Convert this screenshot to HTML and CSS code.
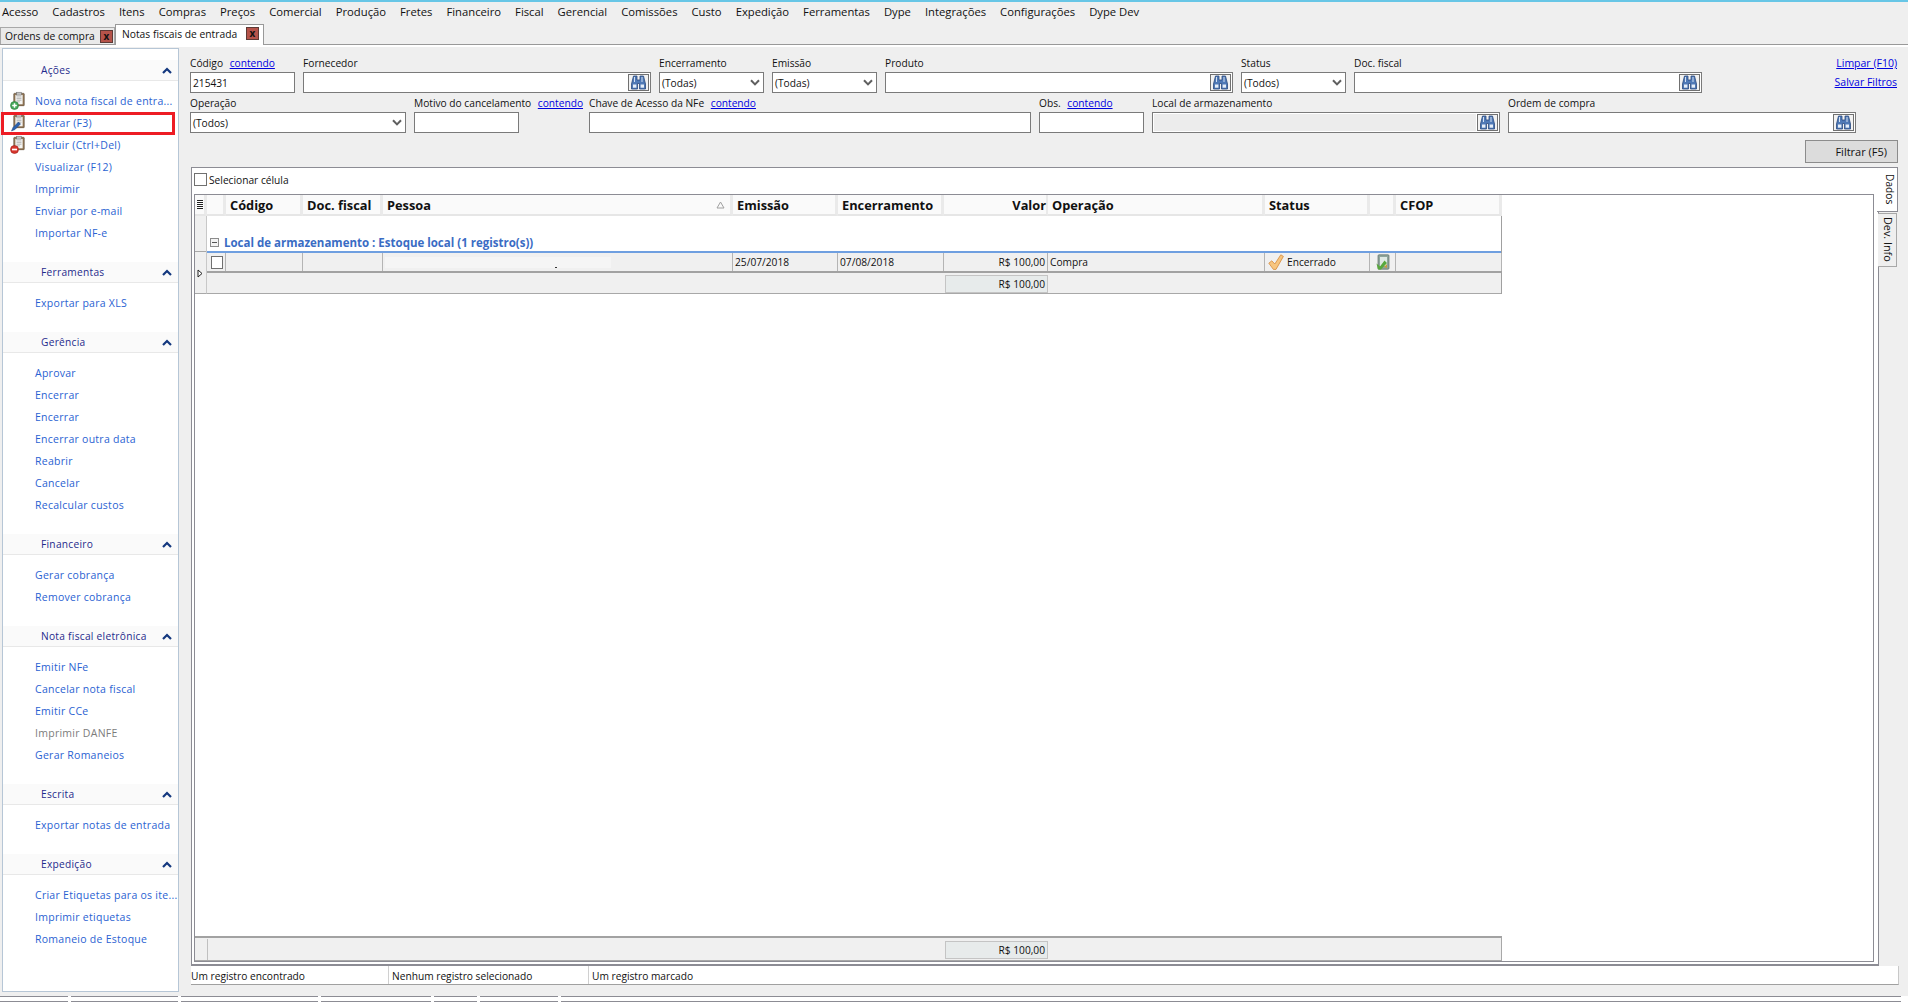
FILE: index.html
```html
<!DOCTYPE html>
<html lang="pt-BR">
<head>
    <meta charset="UTF-8">
    <title>Notas fiscais de entrada</title>
    <link rel="stylesheet" href="styles.css">
</head>
<body>
    <svg class="defs" width="0" height="0">
        <symbol id="clip" viewBox="0 0 16 18">
            <rect x="1.5" y="2" width="13" height="15.5" rx="1" fill="#8f7453" stroke="#5f5040" stroke-width="0.7"/>
            <rect x="3.5" y="4" width="9" height="11.5" fill="#f4f4f2"/>
            <rect x="5" y="0.6" width="6" height="3.6" fill="#c2c2c2" stroke="#666" stroke-width="0.6"/>
            <path d="M5 6.5h6M5 8.5h6M5 10.5h6M5 12.5h4" stroke="#9a9a9a" stroke-width="0.8"/>
        </symbol>
        <symbol id="binoc" viewBox="0 0 17 15">
            <path d="M3.5 1h3.5v4h3V1h3.5l2 8v5h-6V8.5H7.5V14h-6V9z" fill="#4f79b6" stroke="#2b4a7d" stroke-width="0.8"/>
            <rect x="3" y="9.5" width="3.4" height="3.2" fill="#e6eef8"/>
            <rect x="10.6" y="9.5" width="3.4" height="3.2" fill="#e6eef8"/>
            <path d="M4.5 2v5M12 2v5" stroke="#d3e1f2" stroke-width="1"/>
        </symbol>
        <symbol id="caret" viewBox="0 0 10 7">
            <path d="M1 1.2 5 5.4 9 1.2" fill="none" stroke="#5f5f5f" stroke-width="2"/>
        </symbol>
        <symbol id="chev" viewBox="0 0 10 7">
            <path d="M1 6 5 2 9 6" fill="none" stroke="#14387f" stroke-width="2.2"/>
        </symbol>
    </svg>

    <nav class="menu">
        <span>Acesso</span><span>Cadastros</span><span>Itens</span><span>Compras</span><span>Preços</span><span>Comercial</span><span>Produção</span><span>Fretes</span><span>Financeiro</span><span>Fiscal</span><span>Gerencial</span><span>Comissões</span><span>Custo</span><span>Expedição</span><span>Ferramentas</span><span>Dype</span><span>Integrações</span><span>Configurações</span><span>Dype Dev</span>
    </nav>

    <div class="tabs">
        <div class="tab">Ordens de compra <b class="close">x</b></div>
        <div class="tab active">Notas fiscais de entrada <b class="close">x</b></div>
    </div>

    <div class="main">
        <aside class="sidebar">
            <section class="group">
                <h3>Ações <svg class="chev"><use href="#chev"/></svg></h3>
                <a class="item">
                    <svg class="item-icon" viewBox="0 0 18 20"><use href="#clip" width="13" height="15" x="2.5" y="0.5"/><circle cx="4.5" cy="14.5" r="4" fill="#46a85a" stroke="#2d7a3d" stroke-width="0.6"/><path d="M2.2 14.5h4.6M4.5 12.2v4.6" stroke="#fff" stroke-width="1.5"/></svg>
                    Nova nota fiscal de entra...
                </a>
                <a class="item marked">
                    <svg class="item-icon" viewBox="0 0 18 20"><use href="#clip" width="13" height="15" x="2.5" y="0.5"/><path d="M1.5 18 3 14.5l5.5-5.5 2 2-5.5 5.5z" fill="#2b62b0" stroke="#1a3d75" stroke-width="0.5"/></svg>
                    Alterar (F3)
                </a>
                <a class="item">
                    <svg class="item-icon" viewBox="0 0 18 20"><use href="#clip" width="13" height="15" x="2.5" y="0.5"/><circle cx="4.5" cy="14.5" r="4" fill="#d8342c" stroke="#9c211b" stroke-width="0.6"/><path d="M2 14.5h5" stroke="#fff" stroke-width="1.7"/></svg>
                    Excluir (Ctrl+Del)
                </a>
                <a class="item">Visualizar (F12)</a>
                <a class="item">Imprimir</a>
                <a class="item">Enviar por e-mail</a>
                <a class="item">Importar NF-e</a>
            </section>
            <section class="group">
                <h3>Ferramentas <svg class="chev"><use href="#chev"/></svg></h3>
                <a class="item">Exportar para XLS</a>
            </section>
            <section class="group">
                <h3>Gerência <svg class="chev"><use href="#chev"/></svg></h3>
                <a class="item">Aprovar</a>
                <a class="item">Encerrar</a>
                <a class="item">Encerrar</a>
                <a class="item">Encerrar outra data</a>
                <a class="item">Reabrir</a>
                <a class="item">Cancelar</a>
                <a class="item">Recalcular custos</a>
            </section>
            <section class="group">
                <h3>Financeiro <svg class="chev"><use href="#chev"/></svg></h3>
                <a class="item">Gerar cobrança</a>
                <a class="item">Remover cobrança</a>
            </section>
            <section class="group">
                <h3>Nota fiscal eletrônica <svg class="chev"><use href="#chev"/></svg></h3>
                <a class="item">Emitir NFe</a>
                <a class="item">Cancelar nota fiscal</a>
                <a class="item">Emitir CCe</a>
                <a class="item disabled">Imprimir DANFE</a>
                <a class="item">Gerar Romaneios</a>
            </section>
            <section class="group">
                <h3>Escrita <svg class="chev"><use href="#chev"/></svg></h3>
                <a class="item">Exportar notas de entrada</a>
            </section>
            <section class="group">
                <h3>Expedição <svg class="chev"><use href="#chev"/></svg></h3>
                <a class="item">Criar Etiquetas para os ite...</a>
                <a class="item">Imprimir etiquetas</a>
                <a class="item">Romaneio de Estoque</a>
            </section>
        </aside>

        <div class="content">
            <div class="filter-row">
                <div class="field w-s">
                    <label>Código <a>contendo</a></label>
                    <div class="input">215431</div>
                </div>
                <div class="field w-l">
                    <label>Fornecedor</label>
                    <div class="input"><span class="look"><svg><use href="#binoc"/></svg></span></div>
                </div>
                <div class="field w-s">
                    <label>Encerramento</label>
                    <div class="input">(Todas)<svg class="caret"><use href="#caret"/></svg></div>
                </div>
                <div class="field w-s">
                    <label>Emissão</label>
                    <div class="input">(Todas)<svg class="caret"><use href="#caret"/></svg></div>
                </div>
                <div class="field w-l">
                    <label>Produto</label>
                    <div class="input"><span class="look"><svg><use href="#binoc"/></svg></span></div>
                </div>
                <div class="field w-s">
                    <label>Status</label>
                    <div class="input">(Todos)<svg class="caret"><use href="#caret"/></svg></div>
                </div>
                <div class="field w-l">
                    <label>Doc. fiscal</label>
                    <div class="input"><span class="look"><svg><use href="#binoc"/></svg></span></div>
                </div>
                <div class="filter-links">
                    <a>Limpar (F10)</a>
                    <a>Salvar Filtros</a>
                </div>
            </div>
            <div class="filter-row">
                <div class="field w-m">
                    <label>Operação</label>
                    <div class="input">(Todos)<svg class="caret"><use href="#caret"/></svg></div>
                </div>
                <div class="field w-motivo">
                    <label>Motivo do cancelamento <a>contendo</a></label>
                    <div class="input w-s"></div>
                </div>
                <div class="field w-xl">
                    <label>Chave de Acesso da NFe <a>contendo</a></label>
                    <div class="input"></div>
                </div>
                <div class="field w-s">
                    <label>Obs. <a>contendo</a></label>
                    <div class="input"></div>
                </div>
                <div class="field w-l">
                    <label>Local de armazenamento</label>
                    <div class="input"><span class="readonly"></span><span class="look"><svg><use href="#binoc"/></svg></span></div>
                </div>
                <div class="field w-l">
                    <label>Ordem de compra</label>
                    <div class="input"><span class="look"><svg><use href="#binoc"/></svg></span></div>
                </div>
            </div>
            <div class="filter-actions">
                <button class="btn-filter">Filtrar (F5)</button>
            </div>

            <div class="panel-wrap">
                <div class="panel">
                    <div class="select-cell"><span class="check"></span> Selecionar célula</div>
                    <div class="grid">
                        <div class="cols grid-head">
                            <div class="hcell hmenu"><i></i></div>
                            <div class="hcell"></div>
                            <div class="hcell">Código</div>
                            <div class="hcell">Doc. fiscal</div>
                            <div class="hcell sorted">Pessoa <svg class="sort" viewBox="0 0 9 8"><path d="M4.5 1 8 7H1z" fill="none" stroke="#a0a0a0"/></svg></div>
                            <div class="hcell">Emissão</div>
                            <div class="hcell">Encerramento</div>
                            <div class="hcell right">Valor</div>
                            <div class="hcell">Operação</div>
                            <div class="hcell">Status</div>
                            <div class="hcell"></div>
                            <div class="hcell">CFOP</div>
                        </div>
                        <div class="grid-body">
                            <div class="rows">
                                <div class="band"><span class="band-top"></span><svg class="marker" viewBox="0 0 6 9"><path d="M1 1l4 3.5L1 8z" fill="#fff" stroke="#222"/></svg></div>
                                <div class="stack">
                                    <div class="group-row"><span class="expander"></span>Local de armazenamento : Estoque local (1 registro(s))</div>
                                    <div class="cols-data data-row">
                                        <div class="cell"><span class="check small"></span></div>
                                        <div class="cell"></div>
                                        <div class="cell"></div>
                                        <div class="cell"><span class="blank"></span><span class="speck"></span></div>
                                        <div class="cell">25/07/2018</div>
                                        <div class="cell">07/08/2018</div>
                                        <div class="cell right">R$ 100,00</div>
                                        <div class="cell">Compra</div>
                                        <div class="cell status-cell">
                                            <svg class="status-icon" viewBox="0 0 16 16"><path d="M.8 9.2 3.8 6.8 6.8 10 12.8.8l2.6 1.6L8 15.4H5.4z" fill="#f7c57e" stroke="#d58a3c" stroke-width="0.8"/></svg>
                                            Encerrado
                                        </div>
                                        <div class="cell center">
                                            <svg class="status-icon" viewBox="0 0 16 16"><rect x="3" y=".8" width="11" height="14.4" rx="1" fill="#8fa59b" stroke="#5f6f67" stroke-width="0.7"/><rect x="5" y="3" width="7" height="9" fill="#dfe9e4"/><path d="M1.5 9.5 5 12.5l4.5-6L12 9l-6 6.5H3z" fill="#58a83c"/><path d="M9 13l3-3v4z" fill="#c99a3c"/></svg>
                                        </div>
                                        <div class="cell"></div>
                                    </div>
                                    <div class="cols-data sum-row">
                                        <div class="sum-cell">R$ 100,00</div>
                                    </div>
                                </div>
                            </div>
                            <div class="grid-foot">
                                <div class="foot-inner">
                                    <span class="foot-left"></span>
                                    <div class="sum-cell">R$ 100,00</div>
                                </div>
                            </div>
                        </div>
                    </div>
                </div>
                <div class="side-tabs">
                    <div class="side-tab active">Dados</div>
                    <div class="side-tab">Dev. Info</div>
                </div>
            </div>

            <div class="statusbar">
                <span class="sb-a">Um registro encontrado</span>
                <span class="sb-b">Nenhum registro selecionado</span>
                <span class="sb-c">Um registro marcado</span>
            </div>
        </div>
    </div>

    <div class="taskbar">
        <span class="t1"></span><span class="t2"></span><span class="t3"></span><span class="t4"></span><span class="t5"></span><span class="t6"></span><span class="t7"></span>
    </div>
</body>
</html>
```

FILE: styles.css
```css
* { box-sizing: border-box; }
html, body { margin: 0; height: 100%; }
body { width: 1908px; height: 1002px; overflow: hidden; background: #efefef; color: #111; font-family: "Open Sans", "Liberation Sans", sans-serif; font-size: 10.2px; border-top: 2px solid #67c6e6; display: flex; flex-direction: column; }
.defs { position: absolute; }

.menu { height: 19px; display: flex; align-items: center; gap: 14px; padding: 0 0 0 2px; font-size: 11.25px; flex: none; }
.tabs { height: 24px; display: flex; align-items: flex-end; border-bottom: 1px solid #999; font-size: 10.3px; flex: none; }
.tab { display: flex; align-items: center; justify-content: space-between; width: 115px; height: 17px; padding: 0 1px 0 4px; background: #e9e9e9; border: 1px solid #a8a8a8; border-bottom: none; white-space: nowrap; }
.tab.active { width: 149px; height: 21px; margin-bottom: -1px; padding: 0 4px 3px 6px; background: #fff; border-color: #999; position: relative; }
.close { width: 13px; height: 13px; line-height: 10px; text-align: center; background: #b5534a; border: 1px solid #5d3a36; color: #111; font-size: 10px; }

.main { flex: 1; display: flex; min-height: 0; border-top: 2px solid #fff; }
.sidebar { width: 177px; margin: 1px 0 4px 2px; padding-top: 11px; background: #fff; border: 1px solid #b6c6d6; flex: none; font-size: 10.5px; letter-spacing: 0.27px; }
.group { padding-bottom: 18px; }
.group h3 { margin: 0 0 9px; height: 21px; padding: 0 6px 0 38px; display: flex; align-items: center; justify-content: space-between; background: #fafafa; border-bottom: 1px solid #e8e8e8; font-size: 10.2px; font-weight: 400; color: #1f2a8c; }
.chev { width: 10px; height: 7px; }
.item { display: flex; align-items: center; height: 22px; padding-left: 32px; color: #2a62d2; position: relative; white-space: nowrap; }
.item.disabled { color: #7c7c7c; }
.item.marked::after { content: ""; box-sizing: border-box; position: absolute; left: -2px; top: 0; width: 174px; height: 23px; border: 3px solid #ed1c24; }
.item-icon { position: absolute; left: 7px; top: 1px; width: 18px; height: 20px; }

.content { flex: 1; min-width: 0; margin-left: 11px; padding-top: 10px; display: flex; flex-direction: column; }
.filter-row { display: flex; gap: 8px; height: 40px; flex: none; }
.field { display: flex; flex-direction: column; flex: none; }
.field label { height: 15px; line-height: 12px; white-space: nowrap; }
.field a, .filter-links a { color: #0000e0; text-decoration: underline; margin-left: 4px; }
.w-s { width: 105px; }
.w-m { width: 216px; }
.w-l { width: 348px; }
.w-xl { width: 442px; }
.w-motivo { width: 167px; }
.input { height: 21px; padding: 0 3px 0 2px; display: flex; align-items: center; justify-content: space-between; background: #fff; border: 1px solid #7a7a7a; position: relative; }
.caret { width: 10px; height: 7px; }
.look { margin: 0 -2px 0 auto; width: 21px; height: 17px; display: flex; align-items: center; justify-content: center; background: #f2f2f2; border: 1px solid #707070; }
.look svg { width: 17px; height: 15px; }
.readonly { position: absolute; left: 1px; top: 1px; bottom: 1px; width: 322px; background: #ececec; }
.filter-links { margin: -1px 0 0 auto; padding: 0 11px 0 0; display: flex; flex-direction: column; align-items: flex-end; gap: 5px; font-size: 10.5px; }
.filter-links a { margin: 0; line-height: 14px; }
.filter-actions { display: flex; justify-content: flex-end; height: 30px; padding: 3px 10px 0 0; flex: none; }
.btn-filter { width: 93px; height: 23px; padding: 0 10px 0 0; text-align: right; font: inherit; font-size: 11px; color: #111; background: #dcdcdc; border: 1px solid #8c8c8c; }

.panel-wrap { display: flex; height: 799px; margin-left: 1px; flex: none; }
.panel { width: 1688px; padding: 5px 4px 2px 2px; background: #fff; border: 1px solid #8c8c94; border-bottom-width: 2px; display: flex; flex-direction: column; flex: none; }
.select-cell { display: flex; align-items: center; gap: 2px; height: 13px; margin-bottom: 8px; flex: none; }
.check { display: inline-block; width: 13px; height: 13px; background: #fff; border: 1px solid #707070; }
.check.small { margin-left: 2px; }
.grid { flex: 1; display: flex; flex-direction: column; border: 1px solid #8c8c94; min-height: 0; }
.cols { display: grid; grid-template-columns: 12px 19px 77px 80px 350px 105px 106px 104px 217px 105px 26px 106px; width: 1307px; }
.cols-data { display: grid; grid-template-columns: 19px 77px 80px 350px 105px 106px 104px 217px 105px 26px 106px; }
.grid-head { height: 21px; flex: none; }
.hcell { display: flex; align-items: center; padding: 1px 3px 0 4px; background: #fafafa; border-right: 3px solid #eaeaea; border-bottom: 2px solid #e6e6e6; font-size: 12.8px; font-weight: 700; white-space: nowrap; }
.hcell.right { justify-content: flex-end; padding-right: 0; border-right-width: 2px; }
.hcell.sorted { justify-content: space-between; padding-right: 5px; }
.hmenu { padding: 0; justify-content: center; }
.hmenu i { width: 6px; height: 9px; background: repeating-linear-gradient(#222 0 1px, #fff 1px 2px); }
.sort { width: 9px; height: 8px; }
.grid-body { flex: 1; display: flex; flex-direction: column; justify-content: space-between; min-height: 0; }
.rows { display: flex; width: 1307px; border-right: 1px solid #a0a0a0; }
.band { width: 12px; background: #f0f0f0; border-right: 1px solid #c8c8c8; border-bottom: 1px solid #a8a8a8; position: relative; flex: none; }
.band-top { position: absolute; left: 0; right: 0; top: 35px; border-top: 1px solid #a8a8a8; }
.marker { position: absolute; left: 2px; top: 53px; width: 6px; height: 9px; }
.stack { flex: 1; min-width: 0; }
.group-row { height: 37px; padding: 17px 0 0 3px; display: flex; align-items: center; gap: 5px; background: #fff; border-bottom: 2px solid #6f9fe0; color: #3a6cc4; font-size: 11.5px; font-weight: 700; white-space: nowrap; }
.expander { width: 9px; height: 9px; background: linear-gradient(#555, #555) center / 5px 1px no-repeat #f4f4f4; border: 1px solid #8c8c8c; }
.data-row { height: 20px; background: #f0f0f0; border-bottom: 2px solid #a2a2a2; }
.cell { display: flex; align-items: center; gap: 2px; padding: 0 2px; height: 18px; border-right: 1px solid #b4b4b4; white-space: nowrap; position: relative; }
.cell.right { justify-content: flex-end; }
.cell.center { justify-content: center; }
.status-cell { padding-left: 3px; gap: 3px; }
.blank { width: 226px; height: 11px; background: #f5f5f5; }
.speck { position: absolute; left: 172px; top: 14px; width: 2px; height: 1px; background: #333; }
.status-icon { width: 16px; height: 16px; flex: none; }
.sum-row { height: 21px; background: #f0f0f0; border-bottom: 1px solid #a8a8a8; position: relative; }
.sum-cell { display: flex; align-items: center; justify-content: flex-end; width: 103px; height: 18px; padding-right: 2px; background: #e7ebeb; border: 1px solid #c4c4c4; }
.sum-row .sum-cell { grid-column: 7; margin: 2px 0 0 1px; }
.grid-foot { width: 1307px; height: 25px; border-top: 2px solid #a2a2a2; border-right: 1px solid #a8a8a8; border-bottom: 1px solid #a8a8a8; background: #f0f0f0; flex: none; }
.foot-inner { display: flex; align-items: center; height: 100%; padding-top: 1px; }
.foot-left { width: 13px; height: 100%; border-right: 1px solid #c0c0c0; margin-right: 737px; }

.side-tabs { width: 21px; display: flex; flex-direction: column; flex: none; margin-left: -2px; }
.side-tab { writing-mode: vertical-rl; width: 19px; height: 54px; margin: 1px 0 0 1px; padding-top: 3px; background: #efefef; border: 1px solid #a8a8a8; border-left: none; font-size: 10.8px; white-space: nowrap; }
.side-tab.active { width: 21px; height: 45px; margin: 0; padding-top: 6px; background: #fff; border: 1px solid #8c8c94; border-left: none; font-size: 10.2px; position: relative; }

.statusbar { display: flex; align-items: center; width: 1708px; height: 19px; margin-left: 1px; background: #fff; border-bottom: 1px solid #a0a0a0; border-right: 1px solid #c8c8c8; flex: none; }
.statusbar span { height: 100%; line-height: 20px; }
.sb-a { width: 198px; border-right: 1px solid #d0d0d0; }
.sb-b { width: 200px; padding-left: 3px; border-right: 1px solid #d0d0d0; }
.sb-c { padding-left: 3px; }

.taskbar { height: 6px; display: flex; gap: 3px; background: #fff; flex: none; }
.taskbar span { height: 6px; border-top: 1px solid #8c8c94; border-bottom: 1px solid #8c8c94; flex: none; }
.t1 { width: 68px; }
.t2 { width: 107px; }
.t3 { width: 137px; }
.t4 { width: 110px; }
.t5 { width: 43px; }
.t6 { width: 78px; }
.t7 { width: 1340px; }
```
